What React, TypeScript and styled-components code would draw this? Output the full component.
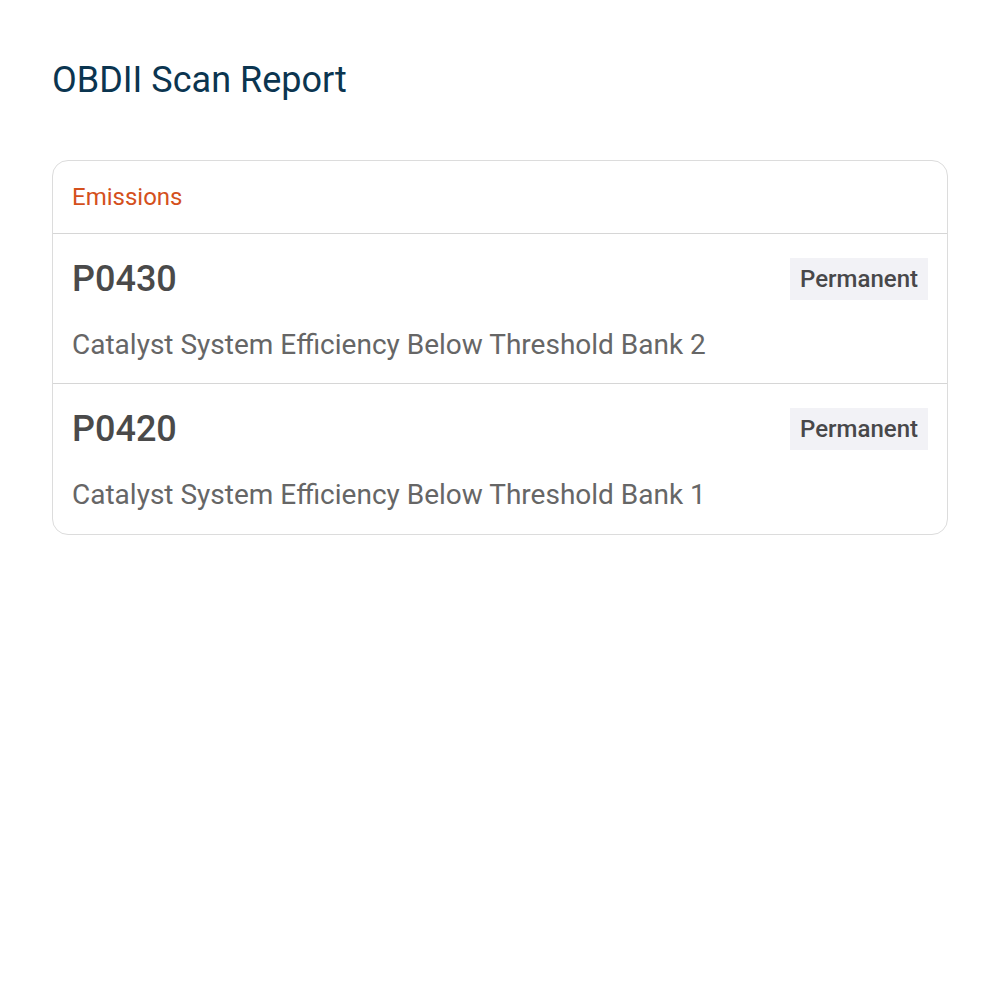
import React from "react";
import styled, { createGlobalStyle } from "styled-components";

const Global = createGlobalStyle`
  html, body { margin: 0; padding: 0; background: #ffffff; }
  body { font-family: Roboto, "Liberation Sans", sans-serif; }
`;

const Page = styled.div`
  padding: 52px 52px;
  display: flex;
  flex-direction: column;
  gap: 52px;
`;

const Title = styled.h1`
  margin: 0;
  font-size: 36px;
  font-weight: 400;
  color: #0b3550;
  line-height: 56px;
`;

const Card = styled.div`
  border: 1px solid #dcdcdc;
  border-radius: 16px;
  overflow: hidden;
`;

const Header = styled.div`
  height: 72px;
  padding: 0 19px;
  display: flex;
  align-items: center;
  border-bottom: 1px solid #d6d6d6;
  color: #d4501c;
  font-size: 24px;
`;

const Row = styled.div<{ $last?: boolean }>`
  height: 150px;
  box-sizing: border-box;
  padding: 24px 19px 0;
  display: flex;
  flex-direction: column;
  gap: 28px;
  border-bottom: ${(p) => (p.$last ? "none" : "1px solid #d6d6d6")};
`;

const TopLine = styled.div`
  display: flex;
  justify-content: space-between;
  align-items: center;
  height: 42px;
`;

const Code = styled.div`
  font-size: 36px;
  font-weight: 500;
  color: #4a4a4a;
`;

const Badge = styled.span`
  background: #f2f2f6;
  color: #48484a;
  font-size: 24px;
  font-weight: 500;
  height: 42px;
  padding: 0 10px;
  display: flex;
  align-items: center;
`;

const Desc = styled.div`
  font-size: 28px;
  color: #666666;
  line-height: 34px;
`;

const codes = [
  { code: "P0430", desc: "Catalyst System Efficiency Below Threshold Bank 2" },
  { code: "P0420", desc: "Catalyst System Efficiency Below Threshold Bank 1" },
];

export default function App() {
  return (
    <>
      <Global />
      <Page>
        <Title>OBDII Scan Report</Title>
        <Card>
          <Header>Emissions</Header>
          {codes.map((c, i) => (
            <Row key={c.code} $last={i === codes.length - 1}>
              <TopLine>
                <Code>{c.code}</Code>
                <Badge>Permanent</Badge>
              </TopLine>
              <Desc>{c.desc}</Desc>
            </Row>
          ))}
        </Card>
      </Page>
    </>
  );
}
